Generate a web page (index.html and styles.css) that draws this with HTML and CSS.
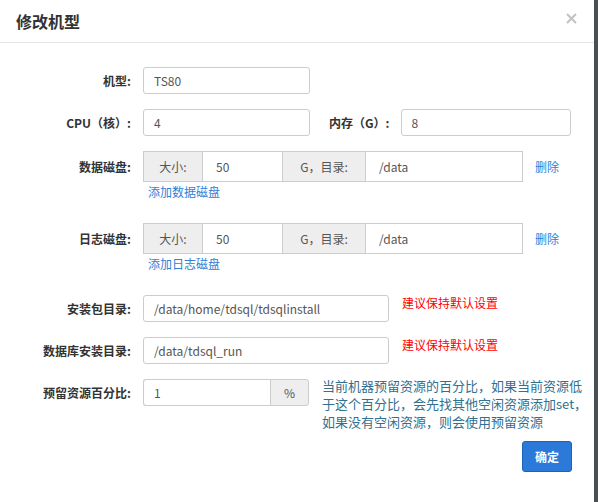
FILE: index.html
```html
<!DOCTYPE html>
<html>
<head>
<meta charset="UTF-8">
<title>修改机型</title>
<link rel="stylesheet" href="styles.css">
</head>
<body>

<div class="modal">
	<div class="modal-header">
		<span class="modal-title">修改机型</span>
		<span class="close">
			<svg width="11" height="11" viewBox="0 0 11 11"><path d="M1 1L10 10M10 1L1 10" stroke="#c2c2c2" stroke-width="2" fill="none"/></svg>
		</span>
	</div>

	<div class="modal-body">
		<!-- 机型 -->
		<div class="form-row">
			<label class="form-label">机型:</label>
			<input type="text" class="txt txt-short" value="TS80">
		</div>

		<!-- CPU / 内存 -->
		<div class="form-row">
			<label class="form-label">CPU（核）:</label>
			<input type="text" class="txt txt-short" value="4">
			<label class="inline-label">内存（G）:</label>
			<input type="text" class="txt txt-mem" value="8">
		</div>

		<!-- 数据磁盘 -->
		<div class="form-row disk-row">
			<label class="form-label label-disk">数据磁盘:</label>
			<div class="disk-box">
				<div class="disk-line">
					<div class="input-group">
						<span class="addon addon-size">大小:</span>
						<input type="text" class="grp-txt grp-size" value="50">
						<span class="addon addon-dir">G，目录:</span>
						<input type="text" class="grp-txt grp-dir" value="/data">
					</div>
					<a class="link link-del">删除</a>
				</div>
				<a class="link link-add">添加数据磁盘</a>
			</div>
		</div>

		<!-- 日志磁盘 -->
		<div class="form-row disk-row">
			<label class="form-label label-disk">日志磁盘:</label>
			<div class="disk-box">
				<div class="disk-line">
					<div class="input-group">
						<span class="addon addon-size">大小:</span>
						<input type="text" class="grp-txt grp-size" value="50">
						<span class="addon addon-dir">G，目录:</span>
						<input type="text" class="grp-txt grp-dir" value="/data">
					</div>
					<a class="link link-del">删除</a>
				</div>
				<a class="link link-add">添加日志磁盘</a>
			</div>
		</div>

		<!-- 目录 -->
		<div class="form-row">
			<label class="form-label">安装包目录:</label>
			<input type="text" class="txt txt-path" value="/data/home/tdsql/tdsqlinstall">
			<span class="tip-red">建议保持默认设置</span>
		</div>

		<div class="form-row">
			<label class="form-label">数据库安装目录:</label>
			<input type="text" class="txt txt-path" value="/data/tdsql_run">
			<span class="tip-red">建议保持默认设置</span>
		</div>

		<!-- 预留资源 -->
		<div class="form-row row-last">
			<label class="form-label">预留资源百分比:</label>
			<div class="pct-group">
				<input type="text" class="pct-txt" value="1">
				<span class="addon addon-pct">%</span>
			</div>
			<p class="tip-info">当前机器预留资源的百分比，如果当前资源低于这个百分比，会先找其他空闲资源添加set，如果没有空闲资源，则会使用预留资源</p>
		</div>
	</div>

	<div class="modal-footer">
		<button type="button" class="btn">确定</button>
	</div>
</div>

</body>
</html>
```

FILE: styles.css
```css
* {box-sizing: border-box; font-family: "Noto Sans CJK SC", "Microsoft YaHei", sans-serif;}

body {margin: 0; background-color: #4b4e52;}

.modal {width: 594px; height: 502px; background-color: #fff; font-size: 12px; color: #333;}

.modal-header {height: 43px; border-bottom: 1px solid #e5e5e5; padding: 0 17px 0 16px; display: flex; align-items: center; justify-content: space-between;}
.modal-title {font-size: 16px; font-weight: bold; color: #333; margin-top: -1px;}
.close {display: flex; margin-top: -6px; cursor: pointer;}

.modal-body {padding-top: 24px;}

.form-row {display: flex; align-items: flex-start; margin-bottom: 15px;}
.form-label {width: 131px; flex-shrink: 0; margin-right: 12px; text-align: right; font-weight: bold; line-height: 27px; color: #333;}
.label-disk {line-height: 31px;}
.inline-label {margin: 0 11px 0 19px; font-weight: bold; line-height: 27px;}

.txt {height: 27px; border: 1px solid #ccc; border-radius: 3px; padding: 0 10px; font-size: 12px; color: #555; outline: none;}
.txt-short {width: 167px;}
.txt-mem {width: 170px;}
.txt-path {width: 246px;}

/* 磁盘 */
.disk-row {margin-bottom: 23px;}
.disk-line {display: flex; align-items: center;}
.input-group {display: flex; width: 380px; height: 31px;}
.addon {display: flex; align-items: center; justify-content: center; background-color: #eee; border: 1px solid #ccc; color: #555;}
.addon-size {width: 60px;}
.addon-dir {width: 82px; border-left: none; border-right: none;}
.grp-txt {height: 31px; border: 1px solid #ccc; padding: 0 13px; font-size: 12px; color: #555; outline: none;}
.grp-size {width: 80px; border-left: none;}
.grp-dir {width: 158px;}

.link {color: #2f80d8; cursor: pointer;}
.link-del {margin-left: 12px;}
.link-add {display: block; margin: 2px 0 0 5px; line-height: 16px;}

.tip-red {margin-left: 13px; line-height: 16px; color: #f00;}

/* 预留资源 */
.row-last {margin-bottom: 0;}
.pct-group {display: flex; width: 166px; height: 27px;}
.pct-txt {width: 127px; height: 27px; border: 1px solid #ccc; border-right: none; border-radius: 3px 0 0 3px; padding: 0 10px; font-size: 12px; color: #555; outline: none;}
.addon-pct {width: 39px; border-radius: 0 3px 3px 0;}
.tip-info {width: 268px; margin: -2px 0 0 13px; font-size: 13px; line-height: 18px; color: #31708f;}

.modal-footer {display: flex; justify-content: flex-end; padding-right: 22px; margin-top: 10px;}
.btn {width: 50px; height: 31px; border: 1px solid #1f63b8; border-radius: 3px; background-color: #2b79d9; color: #fff; font-size: 12px; font-weight: bold;}
```
